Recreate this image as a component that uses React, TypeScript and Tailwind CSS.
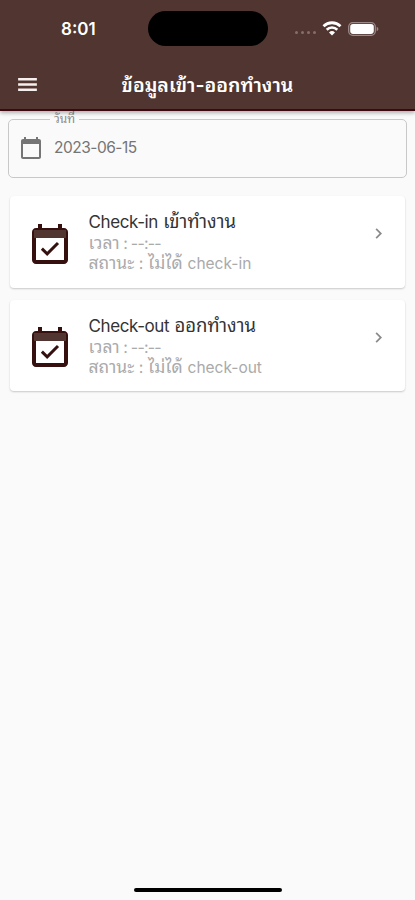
import type { ReactNode } from 'react';

const records = [
  { title: 'Check-in', titleThai: 'เข้าทำงาน', status: 'check-in', height: 'h-[92px]' },
  { title: 'Check-out', titleThai: 'ออกทำงาน', status: 'check-out', height: 'h-[91px]' },
];

export default function App() {
  return (
    <div className="flex h-[900px] w-[415px] flex-col overflow-hidden bg-[#fafafa] font-['Inter','Noto_Sans_Thai_Looped','Noto_Looped_Thai','Loma','Umpush','Laksaman','Garuda','Waree',sans-serif]">
      <header className="z-10 h-[111px] shrink-0 border-b-2 border-[#3f0711] bg-[#503530] text-white shadow-[0_2px_4px_rgba(0,0,0,0.3)]">
        <StatusBar />
        <div className="grid h-[57px] grid-cols-[56px_1fr_56px] items-center">
          <MaterialIcon size={25} className="ml-[15px] text-[#f5efed]">
            <path d="M3 18.2h18v-2.4H3v2.4zm0-5h18v-2.4H3v2.4zm0-7.4v2.4h18V5.8H3z" />
          </MaterialIcon>
          <h1 className="whitespace-nowrap text-center text-[19.5px] font-semibold leading-6">ข้อมูลเข้า-ออกทำงาน</h1>
        </div>
      </header>

      <main className="flex flex-1 flex-col">
        {/* Date field */}
        <fieldset className="mx-2 mt-0.5 h-[65px] rounded-[5px] border-[1.5px] border-[#c8c8c8] pl-2.5">
          <legend className="ml-[31px] h-3 px-1 text-[12px] leading-3 text-[#8a8a8a]">วันที่</legend>
          <div className="flex h-[46px] items-center gap-[11px] text-[#757575]">
            <MaterialIcon size={24}>
              <path d="M20 3h-1V1h-2v2H7V1H5v2H4c-1.1 0-2 .9-2 2v16c0 1.1.9 2 2 2h16c1.1 0 2-.9 2-2V5c0-1.1-.9-2-2-2zm0 18H4V8h16v13z" />
            </MaterialIcon>
            <span className="text-[15.5px] tracking-[-0.5px]">2023-06-15</span>
          </div>
        </fieldset>

        {/* Records */}
        <div className="mx-2.5 mt-[18px] flex flex-col gap-[11.5px]">
          {records.map((record) => (
            <RecordCard key={record.title} {...record} />
          ))}
        </div>
      </main>

      <div className="mx-auto mb-2 h-1 w-[148px] rounded-full bg-black" />
    </div>
  );
}

function StatusBar() {
  return (
    <div className="flex h-14 items-center pt-px">
      <span className="ml-[61px] w-[87px] pt-0.5 text-[17px] font-semibold">8:01</span>
      <div className="h-[35px] w-[120px] rounded-full bg-black" />
      <div className="ml-[27px] flex items-center">
        <div className="mt-2 flex gap-[2.7px]">
          {[0, 1, 2, 3].map((dot) => (
            <span key={dot} className="size-[3.3px] rounded-full bg-[#846f6b]" />
          ))}
        </div>
        <svg className="ml-1.5" width="20" height="15" viewBox="0 0 20 15" fill="none">
          <path d="M1.5 5.2a12.2 12.2 0 0 1 17 0" stroke="currentColor" strokeWidth="2.8" />
          <path d="M4.7 8.7a7.6 7.6 0 0 1 10.6 0" stroke="currentColor" strokeWidth="2.6" />
          <path d="M10 14.5l-3-3.1a4.3 4.3 0 0 1 6 0z" fill="currentColor" />
        </svg>
        <svg className="ml-1.5" width="31" height="14" viewBox="0 0 31 14">
          <rect x=".7" y=".7" width="26.6" height="12.6" rx="4" fill="none" stroke="#9a8986" strokeWidth="1.3" />
          <rect x="2.2" y="2.1" width="23.6" height="9.8" rx="2.8" fill="currentColor" />
          <path d="M28.7 4.8c2.2.8 2.2 3.6 0 4.4z" fill="#9a8986" />
        </svg>
      </div>
    </div>
  );
}

type RecordCardProps = {
  title: string;
  titleThai: string;
  status: string;
  height: string;
};

function RecordCard({ title, titleThai, status, height }: RecordCardProps) {
  return (
    <div className={`flex items-start rounded-[4px] bg-white shadow-[0_1px_2px_rgba(0,0,0,0.2)] ${height}`}>
      <MaterialIcon size={48} className="ml-[15.5px] mt-[25.5px] text-[#35100f]">
        <path d="M16.53 11.06L15.47 10l-4.88 4.88-2.12-2.12-1.06 1.06L10.59 17l5.94-5.94zM19 3h-1V1h-2v2H8V1H6v2H5c-1.11 0-1.99.9-1.99 2L3 19c0 1.1.89 2 2 2h14c1.1 0 2-.9 2-2V5c0-1.1-.9-2-2-2zm0 16H5V8h14v11z" />
        <path d="M4 4h16v4H4z" fill="#503530" />
      </MaterialIcon>
      <div className="ml-[15px] mt-[14px] flex-1 whitespace-nowrap">
        <p className="h-[23px] text-[18.5px] leading-[23px] text-[#333]">
          <span className="text-[17px] tracking-[-0.4px]">{title}</span> {titleThai}
        </p>
        <p className="h-5 text-[17.5px] leading-5 text-[#aaa]">
          เวลา<span className="text-[16px] tracking-[-0.8px]"> : --:--</span>
        </p>
        <p className="h-5 text-[17.5px] leading-5 text-[#aaa]">
          สถานะ<span className="text-[16px]"> : </span>ไม่ได้ <span className="text-[15.5px]">{status}</span>
        </p>
      </div>
      <MaterialIcon size={21} className="mr-4 mt-[27px] text-[#8a8a8a]">
        <path d="M10 6L8.59 7.41 13.17 12l-4.58 4.59L10 18l6-6z" />
      </MaterialIcon>
    </div>
  );
}

function MaterialIcon({ size, className = '', children }: { size: number; className?: string; children: ReactNode }) {
  return (
    <svg width={size} height={size} viewBox="0 0 24 24" fill="currentColor" className={`shrink-0 ${className}`}>
      {children}
    </svg>
  );
}
